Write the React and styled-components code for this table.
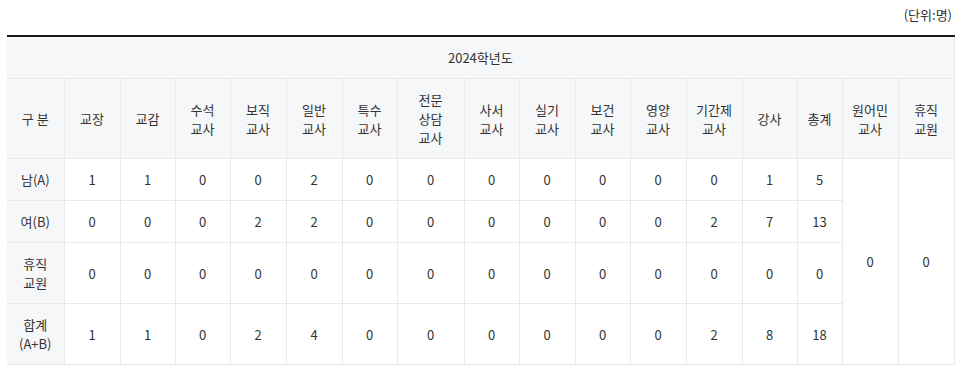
import React from "react";
import styled, { createGlobalStyle } from "styled-components";

const Global = createGlobalStyle`
  html, body { margin: 0; padding: 0; background: #fff; }
  body { font-family: "Noto Sans CJK KR", "Noto Sans", sans-serif; color: #333; }
`;

const Wrap = styled.div`
  width: 947px;
  padding: 0 12px 0 7px;
`;

const Unit = styled.div`
  text-align: right;
  font-size: 13px;
  line-height: 18px;
  padding: 6px 2px 0 0;
  height: 29px;
  color: #333;
`;

const Table = styled.table`
  width: 947px;
  border-collapse: collapse;
  table-layout: fixed;
  border-top: 2px solid #1a1a1a;
  font-size: 13px;
`;

const Th = styled.th`
  background: #f6f7f9;
  font-weight: 400;
  color: #333;
  border: 1px solid #e8e9eb;
  border-left: ${p => (p.$first ? "none" : "1px solid #e8e9eb")};
  border-top: ${p => (p.$top ? "none" : "1px solid #e8e9eb")};
  padding: 11px 0;
  line-height: 19px;
  text-align: center;
  vertical-align: middle;
`;

const Td = styled.td`
  background: #fff;
  color: #333;
  border: 1px solid #e8e9eb;
  padding: 11px 0;
  line-height: 19px;
  text-align: center;
  vertical-align: middle;
`;

const widths = [57, 56, 55, 55, 56, 56, 55, 67, 55, 56, 55, 56, 56, 55, 45, 56, 56];

const heads = [
  ["교장"], ["교감"], ["수석", "교사"], ["보직", "교사"], ["일반", "교사"],
  ["특수", "교사"], ["전문", "상담", "교사"], ["사서", "교사"], ["실기", "교사"],
  ["보건", "교사"], ["영양", "교사"], ["기간제", "교사"], ["강사"], ["총계"],
  ["원어민", "교사"], ["휴직", "교원"],
];

const rows = [
  { label: ["남(A)"], vals: [1, 1, 0, 0, 2, 0, 0, 0, 0, 0, 0, 0, 1, 5] },
  { label: ["여(B)"], vals: [0, 0, 0, 2, 2, 0, 0, 0, 0, 0, 0, 2, 7, 13] },
  { label: ["휴직", "교원"], vals: [0, 0, 0, 0, 0, 0, 0, 0, 0, 0, 0, 0, 0, 0] },
  { label: ["합계", "(A+B)"], vals: [1, 1, 0, 2, 4, 0, 0, 0, 0, 0, 0, 2, 8, 18] },
];

const Lines = ({ lines }) =>
  lines.map((l, i) => (
    <React.Fragment key={i}>
      {i > 0 && <br />}
      {l}
    </React.Fragment>
  ));

export default function App() {
  return (
    <>
      <Global />
      <Wrap>
        <Unit>(단위:명)</Unit>
        <Table>
          <colgroup>
            {widths.map((w, i) => (
              <col key={i} style={{ width: w }} />
            ))}
          </colgroup>
          <thead>
            <tr>
              <Th colSpan={17} $first $top>2024학년도</Th>
            </tr>
            <tr>
              <Th $first>구 분</Th>
              {heads.map((h, i) => (
                <Th key={i}>
                  <Lines lines={h} />
                </Th>
              ))}
            </tr>
          </thead>
          <tbody>
            {rows.map((r, ri) => (
              <tr key={ri}>
                <Th $first>
                  <Lines lines={r.label} />
                </Th>
                {r.vals.map((v, vi) => (
                  <Td key={vi}>{v}</Td>
                ))}
                {ri === 0 && (
                  <>
                    <Td rowSpan={4}>0</Td>
                    <Td rowSpan={4}>0</Td>
                  </>
                )}
              </tr>
            ))}
          </tbody>
        </Table>
      </Wrap>
    </>
  );
}
